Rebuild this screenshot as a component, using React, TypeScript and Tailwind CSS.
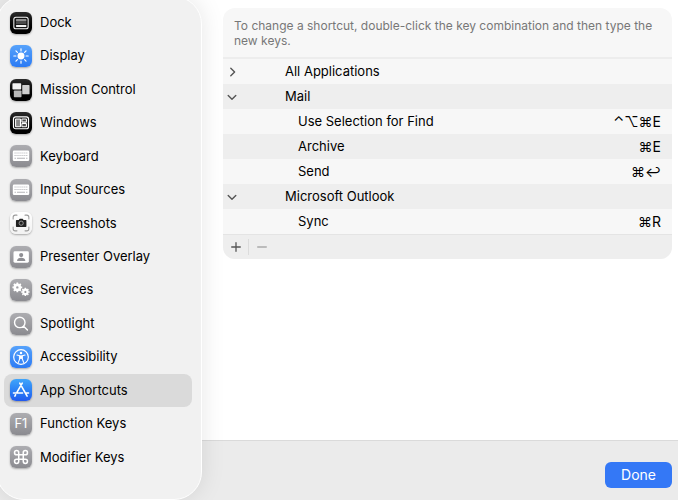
import { useState, type ReactNode } from 'react'
import clsx from 'clsx'

type Tone = 'black' | 'gray' | 'blue' | 'store' | 'white'

interface Section {
  name: string
  tone: Tone
  glyph: ReactNode
}

interface ShortcutGroup {
  app: string
  open: boolean
  items: { name: string; keys: string }[]
}

const tones: Record<Tone, string> = {
  black: 'bg-linear-to-b from-[#2b2b2b] to-black',
  gray: 'bg-linear-to-b from-[#adadb1] to-[#8b8b90]',
  blue: 'bg-linear-to-b from-[#56a2fb] to-[#2b7af4]',
  store: 'bg-linear-to-b from-[#41a5fa] to-[#2259ee]',
  white: 'bg-linear-to-b from-white to-[#f2f2f2]',
}

const rays = [0, 45, 90, 135, 180, 225, 270, 315]
const teeth = [0, 45, 90, 135]

function KeyboardGlyph() {
  return (
    <>
      <rect x="8" y="16" width="47" height="30" rx="4" fill="#fff" />
      <g stroke="#b4b4b8" strokeWidth="3">
        <path d="M13 23h37M13 30h37" strokeDasharray="3 2.6" />
        <path d="M13 38h4M20 38h23M46 38h4" />
      </g>
    </>
  )
}

function Gear({ x, y, r }: { x: number; y: number; r: number }) {
  return (
    <g transform={`translate(${x} ${y})`} stroke="#fff">
      <circle r={r * 0.52} fill="none" strokeWidth={r * 0.54} />
      {teeth.map((a) => (
        <path
          key={a}
          d={`M0 ${-r}V${-r * 0.7}M0 ${r * 0.7}V${r}`}
          strokeWidth={r * 0.36}
          transform={`rotate(${a})`}
        />
      ))}
    </g>
  )
}

const sections: Section[] = [
  {
    name: 'Dock',
    tone: 'black',
    glyph: (
      <>
        <rect x="11" y="15" width="41" height="33" rx="6" fill="#111" stroke="#f5f5f5" strokeWidth="3" />
        <rect x="17" y="20" width="30" height="7" rx="2" fill="#8f8f8f" />
        <rect x="17" y="27" width="30" height="8" fill="#4a4a4a" />
        <rect x="17" y="37" width="30" height="6" rx="2" fill="#f4f4f4" />
      </>
    ),
  },
  {
    name: 'Display',
    tone: 'blue',
    glyph: (
      <>
        <circle cx="31.5" cy="31.5" r="10" fill="#fff" />
        {rays.map((a) => (
          <path
            key={a}
            d="M31.5 11v6"
            stroke="#fff"
            strokeWidth="3.4"
            strokeLinecap="round"
            transform={`rotate(${a} 31.5 31.5)`}
          />
        ))}
      </>
    ),
  },
  {
    name: 'Mission Control',
    tone: 'black',
    glyph: (
      <>
        <rect x="7" y="12" width="25" height="18" rx="2" fill="#f4f4f4" />
        <rect x="35" y="17" width="21" height="27" rx="2" fill="#cfcfcf" />
        <rect x="11" y="33" width="22" height="19" rx="2" fill="#b8b8b8" />
      </>
    ),
  },
  {
    name: 'Windows',
    tone: 'black',
    glyph: (
      <>
        <rect x="10" y="14" width="43" height="34" rx="6" fill="#111" stroke="#fff" strokeWidth="3.4" />
        <rect x="16" y="20" width="14" height="22" rx="1" fill="#8a8a8a" stroke="#fff" strokeWidth="3" />
        <rect x="34" y="20" width="13" height="9" rx="1" fill="#4a4a4a" stroke="#fff" strokeWidth="3" />
        <rect x="34" y="33" width="13" height="9" rx="1" fill="#4a4a4a" stroke="#fff" strokeWidth="3" />
      </>
    ),
  },
  { name: 'Keyboard', tone: 'gray', glyph: <KeyboardGlyph /> },
  { name: 'Input Sources', tone: 'gray', glyph: <KeyboardGlyph /> },
  {
    name: 'Screenshots',
    tone: 'white',
    glyph: (
      <>
        <path
          d="M9 20v-5q0-6 6-6h5M43 9h5q6 0 6 6v5M54 43v5q0 6-6 6h-5M20 54h-5q-6 0-6-6v-5"
          fill="none"
          stroke="#9b9b9b"
          strokeWidth="3"
          strokeLinecap="round"
        />
        <path d="M19 23h6l3-4h8l3 4h6q2 0 2 2v16q0 2-2 2H19q-2 0-2-2V25q0-2 2-2z" fill="#222" />
        <circle cx="32" cy="32" r="6" fill="#222" stroke="#a5a5a5" strokeWidth="2.5" />
      </>
    ),
  },
  {
    name: 'Presenter Overlay',
    tone: 'gray',
    glyph: (
      <>
        <rect x="10" y="15" width="44" height="33" rx="4" fill="#fff" />
        <circle cx="32" cy="26" r="6" fill="#8f8f94" />
        <path d="M20 43q1-9 12-9t12 9z" fill="#8f8f94" />
      </>
    ),
  },
  {
    name: 'Services',
    tone: 'gray',
    glyph: (
      <>
        <Gear x={21} y={24} r={14} />
        <Gear x={44} y={37} r={12} />
      </>
    ),
  },
  {
    name: 'Spotlight',
    tone: 'gray',
    glyph: (
      <path
        d="M28 12a15 15 0 1 0 0 30a15 15 0 1 0 0-30M39 38l11 11"
        fill="none"
        stroke="#fff"
        strokeWidth="4"
        strokeLinecap="round"
      />
    ),
  },
  {
    name: 'Accessibility',
    tone: 'blue',
    glyph: (
      <g fill="none" stroke="#fff" strokeLinecap="round" strokeLinejoin="round">
        <circle cx="31.5" cy="31.5" r="21" strokeWidth="3.4" />
        <circle cx="31.5" cy="20" r="3.6" fill="#fff" stroke="none" />
        <path d="M20 26l8 2v8l-4 11M43 26l-8 2v8l4 11" strokeWidth="3.2" />
        <path d="M28 28h7v8h-7z" fill="#fff" strokeWidth="2" />
      </g>
    ),
  },
  {
    name: 'App Shortcuts',
    tone: 'store',
    glyph: (
      <g fill="none" stroke="#fff" strokeWidth="4.6" strokeLinecap="round">
        <path d="M35 12L19 40M28 12l21 37M10 40h26M45 40h8" />
        <path d="M16 45l-2 4" />
      </g>
    ),
  },
  {
    name: 'Function Keys',
    tone: 'gray',
    glyph: (
      <text x="31" y="44" textAnchor="middle" fontSize="37" fill="#fff">
        F1
      </text>
    ),
  },
  {
    name: 'Modifier Keys',
    tone: 'gray',
    glyph: (
      <path
        d="M25 38V19a6 6 0 1 0-6 6h25a6 6 0 1 0-6-6v25a6 6 0 1 0 6-6H19a6 6 0 1 0 6 6z"
        fill="none"
        stroke="#fff"
        strokeWidth="4.4"
      />
    ),
  },
]

const initialGroups: ShortcutGroup[] = [
  { app: 'All Applications', open: false, items: [] },
  {
    app: 'Mail',
    open: true,
    items: [
      { name: 'Use Selection for Find', keys: '⌃⌥⌘E' },
      { name: 'Archive', keys: '⌘E' },
      { name: 'Send', keys: '⌘↩' },
    ],
  },
  { app: 'Microsoft Outlook', open: true, items: [{ name: 'Sync', keys: '⌘R' }] },
]

function Sidebar({ selected, onSelect }: { selected: string; onSelect: (name: string) => void }) {
  return (
    <nav className="z-10 -ml-1 -mt-1 flex w-[206px] shrink-0 flex-col rounded-[28px] border border-white bg-[#f1f1f1] pt-[9px] pr-[9px] pb-[25px] pl-[7px] shadow-[0_0_24px_rgba(0,0,0,0.1)]">
      <ul className="grid flex-1 auto-rows-fr">
        {sections.map((s) => (
          <li key={s.name} className="flex">
            <button
              type="button"
              onClick={() => onSelect(s.name)}
              className={clsx(
                'flex flex-1 items-center gap-2 rounded-lg pl-1.5 text-left text-[13px] text-black',
                s.name === selected && 'bg-[#dadada]',
              )}
            >
              <span className={clsx('size-[22px] shrink-0 rounded-md shadow-[0_1px_2px_rgba(0,0,0,0.3)]', tones[s.tone])}>
                <svg viewBox="0 0 63 63" className="size-full" aria-hidden="true">
                  {s.glyph}
                </svg>
              </span>
              {s.name}
            </button>
          </li>
        ))}
      </ul>
    </nav>
  )
}

export default function App() {
  const [selected, setSelected] = useState('App Shortcuts')
  const [groups, setGroups] = useState(initialGroups)

  const toggle = (app: string) =>
    setGroups(groups.map((g) => (g.app === app ? { ...g, open: !g.open } : g)))

  const rowClass = 'h-[25px] even:bg-[#eeeeee]'

  return (
    <div className="flex min-h-screen overflow-hidden bg-[#ebebeb] font-['Inter',sans-serif] text-[13px] text-black">
      <Sidebar selected={selected} onSelect={setSelected} />

      <div className="-ml-6 flex min-w-0 flex-1 flex-col">
        <main className="flex-1 bg-white pt-2 pr-[6px] pl-[45px]">
          <section className="overflow-hidden rounded-xl bg-[#f7f7f7]">
            <p className="border-b-2 border-[#ededed] px-[11px] pt-2.5 pb-[9px] text-xs leading-[15px] text-[#777]">
              To change a shortcut, double-click the key combination and then type the new keys.
            </p>
            <table className="w-full border-collapse">
              <tbody>
                {groups.flatMap((g) => [
                  <tr key={g.app} className={rowClass}>
                    <td className="w-[62px] p-0 pl-1">
                      <button
                        type="button"
                        aria-label={g.app}
                        aria-expanded={g.open}
                        onClick={() => toggle(g.app)}
                        className="flex size-[10px] items-center justify-center text-[#555]"
                      >
                        <svg viewBox="0 0 10 10" className="size-full" fill="none" stroke="currentColor" strokeWidth="1.4" strokeLinecap="round" strokeLinejoin="round">
                          <path d={g.open ? 'M1.2 3.4L5 7.2l3.8-3.8' : 'M3.8 1.2L7.6 5 3.8 8.8'} />
                        </svg>
                      </button>
                    </td>
                    <td className="p-0">{g.app}</td>
                    <td />
                  </tr>,
                  ...(g.open ? g.items : []).map((item) => (
                    <tr key={g.app + item.name} className={rowClass}>
                      <td />
                      <td className="p-0 pl-[13px]">{item.name}</td>
                      <td className="p-0 pr-[11px] text-right text-sm">{item.keys}</td>
                    </tr>
                  )),
                ])}
              </tbody>
            </table>
            <div className="flex h-[25px] items-center border-t border-[#e4e4e4] bg-[#eeeeee]">
              <button type="button" aria-label="Add shortcut" className="flex w-[25px] justify-center text-[#555]">
                <svg viewBox="0 0 10 10" className="size-[10px]" stroke="currentColor" strokeWidth="1.3" strokeLinecap="round">
                  <path d="M.7 5h8.6M5 .7v8.6" />
                </svg>
              </button>
              <span className="h-4 w-px bg-[#dcdcdc]" />
              <button type="button" aria-label="Remove shortcut" className="flex w-[25px] justify-center text-[#aaa]">
                <svg viewBox="0 0 10 10" className="size-[10px]" stroke="currentColor" strokeWidth="1.3" strokeLinecap="round">
                  <path d="M.7 5h8.6" />
                </svg>
              </button>
            </div>
          </section>
        </main>

        <footer className="flex h-[60px] items-center justify-end border-t border-[#dadada] bg-[#ebebeb] pt-2 pr-[6px]">
          <button type="button" className="h-[26px] rounded-md bg-[#3478f6] px-4 text-sm text-white">
            Done
          </button>
        </footer>
      </div>
    </div>
  )
}
